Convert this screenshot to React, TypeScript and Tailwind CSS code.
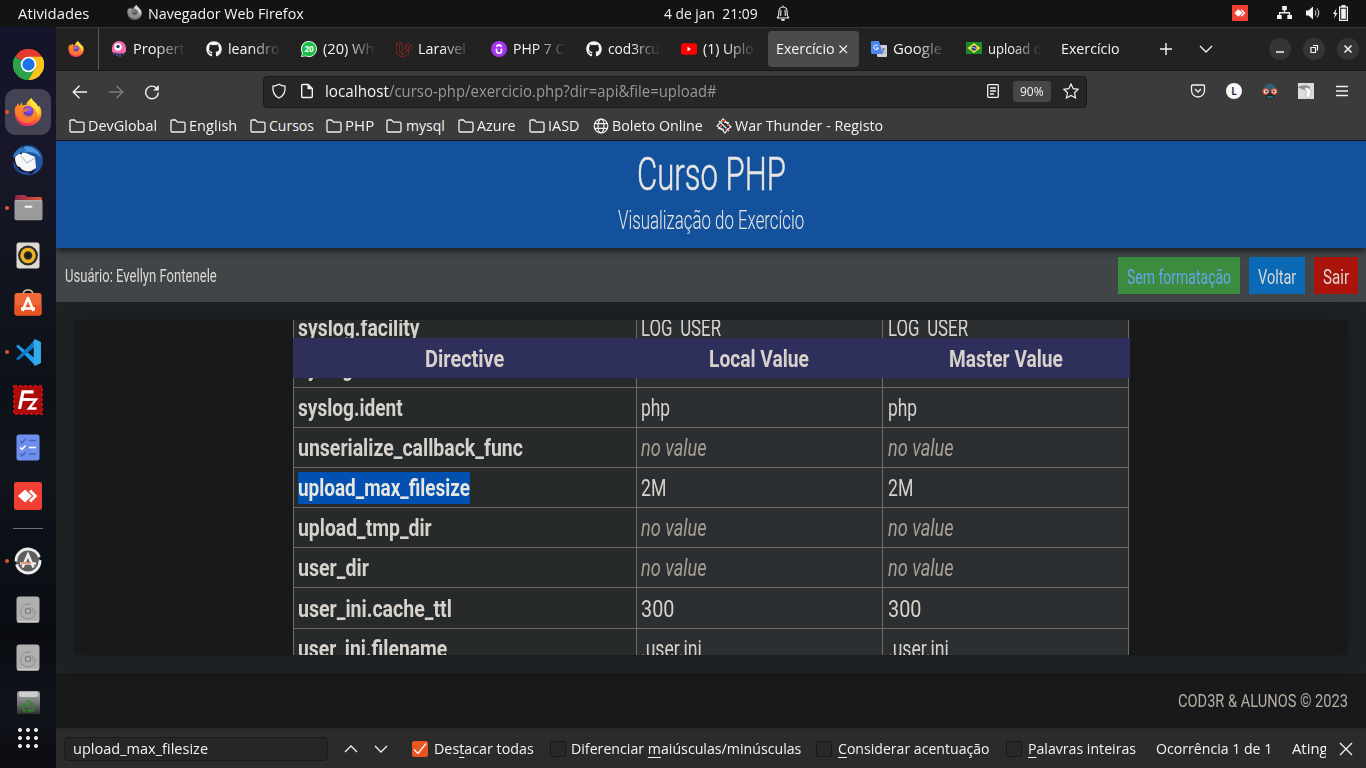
import React, { useLayoutEffect, useRef } from "react";
import { FaGithub, FaLaravel, FaRecycle } from "react-icons/fa";

/* Text run that is condensed or widened to the width of its box. */
function T({ c, children }: { c: string; children: React.ReactNode }) {
  const box = useRef<HTMLSpanElement>(null);
  const run = useRef<HTMLSpanElement>(null);
  useLayoutEffect(() => {
    const fit = () => {
      if (!box.current || !run.current) return;
      run.current.style.transform = `scaleX(${box.current.clientWidth / run.current.offsetWidth})`;
    };
    fit();
    document.fonts?.ready.then(fit);
  }, []);
  return (
    <span ref={box} className={"inline-block shrink-0 whitespace-nowrap " + c}>
      <span ref={run} className="inline-block origin-left whitespace-pre">{children}</span>
    </span>
  );
}

type S = { c?: string };

const Firefox = ({ c = "" }: S) => (
  <svg viewBox="0 0 32 32" className={"shrink-0 " + c}>
    <defs>
      <linearGradient id="ffa" x1="0.8" y1="0" x2="0.3" y2="1">
        <stop offset="0" stopColor="#fff14a" /><stop offset=".35" stopColor="#ffb224" />
        <stop offset=".65" stopColor="#ff5a36" /><stop offset="1" stopColor="#f0246e" />
      </linearGradient>
      <radialGradient id="ffb" cx=".6" cy=".3"><stop offset="0" stopColor="#a05cff" /><stop offset="1" stopColor="#5b33b8" /></radialGradient>
    </defs>
    <path d="M20 0c1 3 3 4 5 6 1 1 2 3 2 4l2-1c2 3 3 7 2 11-1 7-8 12-15 12C7 32 1 26 1 17c0-5 2-9 4-11l1 3 3-4 1 4c1-1 3-1 4-1 0-3 3-6 6-8z" fill="url(#ffa)" />
    <circle cx="16" cy="16" r="7" fill="url(#ffb)" />
    <path d="M1 10c4-1 8 0 10 2l6 0c-1 3-3 4-6 4 1 4 5 5 8 4 3-2 4-6 2-10 5 4 6 10 3 14-3 5-10 6-15 3-4-2-7-7-8-12z" fill="#ff8a26" fillOpacity=".75" />
    <path d="M20 0c1 3 3 4 5 6 4 4 5 10 3 15-1-5-3-8-6-10-4-3-5-7-2-11z" fill="#ffe03c" />
  </svg>
);

const Chrome = () => (
  <svg viewBox="0 0 48 48" className="size-[31px]">
    <path d="M24 24 3.200 12A24 24 0 0 1 44.800 12z" fill="#e33b2e" />
    <path d="M24 24H44.800V12A24 24 0 0 1 24 48z" fill="#fcc31e" />
    <path d="M24 24 24 48A24 24 0 0 1 3.200 12z" fill="#2ba24c" />
    <path d="M24 12H44.800A24 24 0 0 1 24 48L34.500 30z" fill="#fcc31e" />
    <path d="M3.200 12 13.600 30 34.400 30 24 48A24 24 0 0 1 3.200 12z" fill="#2ba24c" />
    <circle cx="24" cy="24" r="12" fill="#fff" /><circle cx="24" cy="24" r="9.500" fill="#1b73e8" />
  </svg>
);

const Thunderbird = () => (
  <svg viewBox="0 0 32 32" className="size-[32px]">
    <path d="M7 4C14-1 26 1 30 11c3 9-1 18-11 20l4-5L6 8z" fill="#2154a3" />
    <path d="M12 3c7-2 15 3 17 11-3-4-9-7-17-6z" fill="#4c97dd" />
    <path d="M3 13c3-4 7-5 11-4l9 4 1 11-5 3c-3 1-9 0-11-4-3 0-5-4-5-10z" fill="#f5f6f8" />
    <path d="M9 12l6 7 8-5" fill="none" stroke="#9ea7b5" strokeWidth=".9" />
    <path d="M1 17l4 6c3 4 5 5 11 5l4 3C10 33 0 26 1 17z" fill="#1c4a92" />
    <path d="M1 14c0-4 3-8 7-10 3-1 6 0 6 3l-7 3z" fill="#2d74bb" />
    <circle cx="9" cy="9.500" r="1" fill="#123" />
  </svg>
);

const Files = () => (
  <svg viewBox="0 0 30 26" className="w-[29px]">
    <defs><linearGradient id="fl"><stop offset="0" stopColor="#8b2548" /><stop offset="1" stopColor="#e25a33" /></linearGradient></defs>
    <path d="M1 2q0-2 2-2h8l3 2h13q2 0 2 2v9H1z" fill="url(#fl)" />
    <rect x="0.500" y="5.500" width="29" height="20.500" rx="2" fill="#9b9b9b" /><rect x="0.500" y="5.500" width="29" height="1" rx=".5" fill="#bbb" />
    <rect x="11" y="11" width="8" height="2.200" rx=".5" fill="#f4f4f4" />
  </svg>
);

const Rhythm = () => (
  <svg viewBox="0 0 24 27" className="mb-[1px] w-[24px]">
    <rect x=".5" y=".5" width="23" height="26" rx="2.500" fill="#dedad2" />
    <circle cx="12" cy="13.500" r="10" fill="#2d2d30" /><circle cx="12" cy="13.500" r="6" fill="none" stroke="#f0b41e" strokeWidth="3.400" /><circle cx="12" cy="13.500" r="2.400" fill="#1a1a1a" />
  </svg>
);

const Store = () => (
  <svg viewBox="0 0 28 27" className="mb-[3px] w-[28px]">
    <path d="M9 6q0-5 5-5t5 5" fill="none" stroke="#d8c3a0" strokeWidth="1.500" />
    <rect x=".5" y="4" width="27" height="22.500" rx="2.500" fill="#f0693a" /><rect x=".5" y="16" width="27" height="10.500" rx="2.500" fill="#e85424" />
    <path d="M8.500 22 14 9l5.500 13M7 19.500h14" fill="none" stroke="#fff" strokeWidth="2.600" strokeLinejoin="round" />
  </svg>
);

const Code = () => (
  <svg viewBox="0 0 26 26" className="w-[27px]">
    <path d="M1 7l2-1.500L21 20v4.500l-2 .5z" fill="#1f9cf0" /><path d="M1 19l2 1.500L21 6V1.500L19 1z" fill="#0a78c2" />
    <path d="M19 0l6 3v20l-6 3-1-2V2z" fill="#35a8ea" />
  </svg>
);

const FileZilla = () => (
  <svg viewBox="0 0 30 30" className="w-[30px]">
    <rect x="1" y="1" width="28" height="28" fill="#ae0a0a" stroke="#bd1010" strokeWidth="2" strokeDasharray="3 2" />
    <path d="M6.500 24 10 6.800h10.500M8.500 14.500h8" fill="none" stroke="#fff" strokeWidth="3.200" />
    <path d="M15 14.500h8l-7 9h7.500" fill="none" stroke="#fff" strokeWidth="2.400" />
  </svg>
);

const Todo = () => (
  <svg viewBox="0 0 24 27" className="mb-[1px] w-[24px]">
    <rect x=".5" y=".5" width="23" height="26" rx="2.500" fill="#6e8fee" />
    <g fill="none" strokeWidth="1.500"><path d="M4 7l2 2 3.500-4M13 6.500h7M4 20l2 2 3.500-4M13 20h7" stroke="#4664bd" /><path d="M4 13.500l2 2 3.500-4M13 13.500h7" stroke="#fff" /></g>
  </svg>
);

const AnyDesk = ({ c = "" }: S) => (
  <svg viewBox="0 0 28 28" className={"shrink-0 " + c}>
    <rect width="28" height="28" rx="1" fill="#f04034" />
    <path d="M4 14l7-6.500 7 6.500-7 6.500z" fill="#fff" /><path d="M16 8.500 21.500 14 16 19.500" fill="none" stroke="#fff" strokeWidth="2.600" />
  </svg>
);

const Updater = () => (
  <svg viewBox="0 0 28 28" className="w-[28px]">
    <circle cx="14" cy="14" r="12" fill="#5e5e5e" stroke="#ececec" strokeWidth="2.800" strokeDasharray="34 3" />
    <path d="M8.500 20.500 14 7.500l5.500 13" fill="none" stroke="#eee" strokeWidth="2.600" /><path d="M6 16.500h16" stroke="#eee" strokeWidth="2.400" /><path d="M7 16h10" stroke="#e8613a" strokeWidth="1.200" />
  </svg>
);

const Disk = () => (
  <svg viewBox="0 0 24 27" className="w-[24px]">
    <rect x=".5" y=".5" width="23" height="26" rx="3" fill="#b0b0b0" /><rect x="1" y="25" width="22" height="1.500" rx=".7" fill="#d0d0d0" />
    <path d="M15 8.500a7.500 7.500 0 1 0 4.500 6.500M15.500 11a5 5 0 0 1 1 6" fill="none" stroke="#929292" strokeWidth="1.100" /><circle cx="12" cy="15" r="2.600" fill="#b8b8b8" stroke="#7d7d7d" strokeWidth="1.300" />
  </svg>
);

const Folder = () => (
  <svg viewBox="0 0 16 14" className="w-[16px] shrink-0" fill="none" stroke="#f1f1f1" strokeWidth="1.300">
    <path d="M1 2.200Q1 1 2.200 1h3.300l2 2.200h6.300q1.200 0 1.200 1.200v7.400q0 1.200-1.200 1.200H2.200Q1 13 1 11.800z" />
  </svg>
);

const Globe = () => (
  <svg viewBox="0 0 16 16" className="w-[16px] shrink-0" fill="none" stroke="#f1f1f1" strokeWidth="1.200">
    <circle cx="8" cy="8" r="6.800" /><ellipse cx="8" cy="8" rx="3" ry="6.800" /><path d="M1.800 5.700h12.400M1.800 10.300h12.400" />
  </svg>
);

const Line = ({ d, c = "", w = 1.3 }: { d: string; c?: string; w?: number }) => (
  <svg viewBox="0 0 16 16" className={"size-[16px] shrink-0 " + c} fill="none" stroke="currentColor" strokeWidth={w}><path d={d} /></svg>
);

function DockCell({ children, dot, active, h = "h-[48px]" }: { children: React.ReactNode; dot?: boolean; active?: boolean; h?: string }) {
  return (
    <div className={"relative flex w-full shrink-0 items-center justify-center overflow-hidden " + h}>
      <div className={"flex h-[46px] w-[46px] items-center justify-center rounded-[11px] " + (active ? "bg-[#444354]" : "")}>{children}</div>
      {dot && <i className="absolute left-[5px] top-[22px] size-[4px] rounded-full bg-[#e95420]" />}
    </div>
  );
}

function Dock() {
  return (
    <aside className="flex w-[56px] shrink-0 flex-col bg-[linear-gradient(180deg,#14142a_0%,#171728_20%,#12151f_32%,#0c1118_50%,#10161b_60%,#0c1119_68%,#0a0c12_82%,#11131b_92%,#0b0c11_100%)] pt-[13px]">
      <DockCell><Chrome /></DockCell>
      <DockCell dot active><Firefox c="size-[28px]" /></DockCell>
      <DockCell><Thunderbird /></DockCell>
      <DockCell dot><Files /></DockCell>
      <DockCell><Rhythm /></DockCell>
      <DockCell><Store /></DockCell>
      <DockCell dot><Code /></DockCell>
      <DockCell><FileZilla /></DockCell>
      <DockCell><Todo /></DockCell>
      <DockCell><AnyDesk c="size-[28px] rounded-[2px]" /></DockCell>
      <div className="flex h-[17px] items-center justify-center"><div className="h-px w-[30px] bg-[#6d6d70]" /></div>
      <DockCell dot><Updater /></DockCell>
      <DockCell><Disk /></DockCell>
      <DockCell><Disk /></DockCell>
      <div className="flex h-[33px] items-start justify-center overflow-hidden pt-[10px]">
        <div className="flex h-[23px] w-[23px] flex-col items-center rounded-t-[3px] bg-[linear-gradient(180deg,#a8a8a8,#777_50%,#303030)]">
          <div className="mt-[1px] h-[5px] w-[19px] rounded-[2px] bg-[#cdcdcd]" />
          <FaRecycle className="mt-[3px] size-[13px] text-[#2a8a28]" />
        </div>
      </div>
      <div className="flex h-[48px] items-center justify-center">
        <div className="grid grid-cols-3 gap-[4px]">
          {Array.from({ length: 9 }, (_, i) => <i key={i} className="size-[4px] rounded-full bg-[#f4f4f4]" />)}
        </div>
      </div>
    </aside>
  );
}

function TopBar() {
  return (
    <div className="flex h-[27px] shrink-0 items-center bg-[#131313] text-[14px] leading-[27px] text-[#f2f2f2]">
      <T c="ml-[18px] w-[71px]">Atividades</T>
      <Firefox c="mb-[2px] ml-[38px] size-[15px] grayscale" />
      <T c="ml-[6px] w-[156px]">Navegador Web Firefox</T>
      <T c="ml-[360px] w-[94px]">{"4 de jan  21:09"}</T>
      <svg viewBox="0 0 16 16" className="mb-[1px] ml-[17px] size-[16px] shrink-0" fill="none" stroke="#eee" strokeWidth="1.100">
        <path d="M2 13C4 12 3.800 10 3.800 7.500 3.800 4 5.500 2 8 2s4.200 2 4.200 5.500c0 2.500-.2 4.500 1.800 5.500zM8 .5v2M6 5q-.3 3-.3 6M10 5q.3 3 .3 6" /><path d="M6.300 14.900h3.400" strokeWidth="1.800" />
      </svg>
      <AnyDesk c="mb-[1px] ml-[441px] size-[16px]" />
      <svg viewBox="0 0 16 14" className="mb-[2px] ml-[29px] w-[15px] shrink-0" fill="#f2f2f2">
        <path d="M5.500 0h5v4.500h-5zM0 9.500h5V14H0zM11 9.500h5V14h-5zM7.300 4h1.400v2.500H14V10h-1.400V7.900H3.400V10H2V6.500h5.300z" />
      </svg>
      <svg viewBox="0 0 16 14" className="mb-[1px] ml-[13px] w-[16px] shrink-0" fill="#f2f2f2">
        <path d="M1 4.500h2.500L8 .5v13l-4.500-4H1z" /><path d="M10 4.500q1.800 2.500 0 5M12 2.500q3.500 4.500 0 9" stroke="#bbb" fill="none" strokeWidth="1.200" />
      </svg>
      <svg viewBox="0 0 16 16" className="mb-[1px] ml-[12px] w-[16px] shrink-0" fill="#f2f2f2">
        <path d="M3.500 3.500 0 9h2l-1 4.500L4.500 8h-2z" /><path d="M8.500 0h4v1.500H15V16H6V1.500h2.500z" /><path d="M7.200 2.700h6.600v12.100H7.200z" fill="#131313" /><path d="M8.200 3.700h4.600v10.100H8.200z" />
      </svg>
    </div>
  );
}

const fade = "[mask-image:linear-gradient(90deg,#000_45%,transparent_102%)]";

function Tab({ icon, text, w }: { icon: React.ReactNode; text: string; w: string }) {
  return (
    <div className="flex w-[95px] shrink-0 items-center">
      <span className="flex w-[16px] justify-center">{icon}</span>
      <span className={"ml-[6px] flex w-[52px] overflow-hidden " + fade}><T c={w}>{text}</T></span>
    </div>
  );
}

function TabBar() {
  return (
    <div className="flex h-[44px] shrink-0 items-center border-b border-t border-b-[#171717] border-t-[#343434] bg-[#222222] text-[14px] leading-[42px] text-[#f5f5f5]">
      <Firefox c="ml-[12px] size-[16px]" />
      <div className="ml-[14px] mr-[12px] h-full w-px shrink-0 bg-[#585858]" />
      <Tab w="w-[52px]" text="Propert" icon={
        <svg viewBox="0 0 16 16" className="size-[16px]"><path d="M3 10v3.500M6 11v4M9 11v5M12.500 9v5" stroke="#5650a8" strokeWidth="1.700" /><path d="M1 11V7a7 7 0 0 1 14 0v4q-3 2-7 1.500T1 11z" fill="#f36ba8" /><circle cx="7" cy="6" r="3.700" fill="#fff" /><circle cx="7" cy="5.500" r="1.700" fill="#243066" /></svg>} />
      <Tab w="w-[51px]" text="leandro" icon={<FaGithub className="size-[16px]" />} />
      <Tab w="w-[51px]" text="(20) Wh" icon={
        <svg viewBox="0 0 16 16" className="size-[16px]"><path d="M8 0a8 8 0 1 1-3.500 15.200L0 16l1-4A8 8 0 0 1 8 0z" fill="#fff" /><path d="M8 .8a7.200 7.200 0 1 1-3.300 13.600L1 15.200l.9-3.500A7.200 7.200 0 0 1 8 .8z" fill="#1dbf4b" /><text x="8" y="11" textAnchor="middle" fontSize="8" fontWeight="700" fill="#fff" fontFamily="Open Sans">20</text></svg>} />
      <Tab w="w-[48px]" text="Laravel" icon={<FaLaravel className="size-[17px] text-[#b3261e]" />} />
      <Tab w="w-[51px]" text="PHP 7 C" icon={
        <svg viewBox="0 0 16 16" className="size-[16px]"><circle cx="8" cy="8" r="8" fill="#a435f0" /><path d="M5.500 7.500v2.500q0 2.200 2.500 2.200t2.500-2.200V7.500M5.200 5.500 8 3.800l2.800 1.700" stroke="#fff" strokeWidth="1.600" fill="none" /></svg>} />
      <Tab w="w-[52px]" text="cod3rcu" icon={<FaGithub className="size-[16px]" />} />
      <Tab w="w-[51px]" text="(1) Uplo" icon={
        <svg viewBox="0 0 16 12" className="w-[16px]"><rect y=".3" width="16" height="11.400" rx="2.500" fill="#f00" /><path d="M6.500 3.800v4.400L10 6z" fill="#fff" /></svg>} />
      <div className="ml-[-8px] flex h-[36px] w-[91px] shrink-0 items-center rounded-[4px] bg-[#4a4a4a]">
        <T c="ml-[8px] w-[59px]">Exercício</T>
        <Line d="M4.500 4.500l7.500 7.500M12 4.500l-7.500 7.500" c="size-[15px]" w={1.100} />
      </div>
      <div className="ml-[12px] flex">
        <Tab w="w-[49px]" text="Google" icon={
          <svg viewBox="0 0 16 16" className="size-[16px]"><rect x="6" y="4" width="10" height="12" rx="1" fill="#cfd3d8" /><path d="M0 1q0-1 1-1h7l4 13H1q-1 0-1-1z" fill="#4b87f0" /><path d="M7 5a2.300 2.300 0 1 0 .3 2H5" stroke="#fff" fill="none" /><path d="M10.500 8h4M12.500 7v1q0 3-2 4.500M11.500 9.500l3 3" stroke="#66717d" fill="none" strokeWidth=".8" /></svg>} />
        <Tab w="w-[54px]" text="upload d" icon={
          <svg viewBox="0 0 16 12" className="mb-[2px] w-[16px]"><rect width="16" height="12" fill="#1d8a2e" /><path d="M8 1l6.500 5L8 11 1.500 6z" fill="#f7e12c" /><circle cx="8" cy="6" r="2.600" fill="#2343a0" /><path d="M5.700 5.500q2.500-.5 4.500 1.200" stroke="#fff" strokeWidth=".6" fill="none" /></svg>} />
      </div>
      <T c="w-[59px]">Exercício</T>
      <Line d="M8 2v12M2 8h12" c="ml-[38px]" w={1.400} />
      <Line d="M2 5l6 6 6-6" c="ml-[24px]" />
      <div className="ml-[55px] flex gap-[12px]">
        <span className="flex size-[22px] items-center justify-center rounded-full bg-[#353535]"><Line d="M4 11h8" w={1.500} /></span>
        <span className="flex size-[22px] items-center justify-center rounded-full bg-[#353535]"><Line d="M5 6.500h4.500v5H5zM7 4.500h4.500v5" w={1.200} /></span>
        <span className="flex size-[22px] items-center justify-center rounded-full bg-[#353535]"><Line d="M4.500 4.500l7 7M11.500 4.500l-7 7" w={1.500} /></span>
      </div>
    </div>
  );
}

function AddressRow() {
  return (
    <div className="flex h-[41px] items-center text-[#f3f3f3]">
      <Line d="M15 8H1M7.500 1.800 1.200 8l6.300 6.200" c="ml-[16px]" w={1.300} />
      <Line d="M1 8h14M8.500 1.800 14.800 8l-6.300 6.200" c="ml-[20px] text-[#7d7d7d]" w={1.300} />
      <svg viewBox="0 0 16 16" className="ml-[20px] size-[16px] shrink-0" fill="none" stroke="currentColor" strokeWidth="1.400"><path d="M14.300 8.500A6.300 6.300 0 1 1 12.500 4" /><path d="M14.800 1v5.500H9.300z" fill="currentColor" stroke="none" /></svg>
      <div className="ml-[103px] flex h-[32px] w-[824px] shrink-0 items-center rounded-[4px] border border-[#181818] bg-[#262626]">
        <Line d="M8 1.200q3 1.800 6 2c.6 5.300-1.200 9.500-6 11.800C3.200 12.700 1.400 8.500 2 3.200q3-.2 6-2z" c="mb-[1px] ml-[7px]" />
        <svg viewBox="0 0 16 16" className="mb-[1px] ml-[12px] size-[16px] shrink-0" fill="none" stroke="currentColor" strokeWidth="1.400"><path d="M2.700 2.500q0-1 1-1h5.500L13.300 5.600v7.900q0 1-1 1H3.700q-1 0-1-1z" /><path d="M8.500 1v5.300h5z" fill="currentColor" stroke="none" /></svg>
        <T c="mb-[2px] ml-[10px] w-[64px] text-[15.500px] leading-[28px]">localhost</T>
        <T c="mb-[2px] w-[328px] text-[15.500px] leading-[28px] text-[#989898]">/curso-php/exercicio.php?dir=api&amp;file=upload#</T>
        <Line d="M3.500 1.700h9q.8 0 .8.800v11q0 .8-.8.800h-9q-.8 0-.8-.8v-11q0-.8.800-.8zM5 5h6M5 8h6M5 11h4" c="mb-[1px] ml-[268px]" />
        <span className="ml-[12px] flex h-[21px] w-[38px] shrink-0 items-center rounded-[3px] bg-[#464646] text-[12.500px] leading-[21px]"><T c="ml-[7px] w-[24px]">90%</T></span>
        <Line d="M8 1l2.200 4.700 5 .6-3.700 3.500 1 5.100L8 12.400l-4.500 2.500 1-5.100L.8 6.300l5-.6z" c="mb-[1px] ml-[12px]" w={1.200} />
      </div>
      <Line d="M2.500 2h11q1 0 1 1v4.500a6.500 6.500 0 0 1-13 0V3q0-1 1-1zM5 6l3 3 3-3" c="mb-[1px] ml-[103px]" />
      <span className="mb-[1px] ml-[20px] flex size-[16px] shrink-0 items-center justify-center rounded-full bg-[#f8f8f8] text-[10px] font-bold leading-[16px] text-[#333]">L</span>
      <svg viewBox="0 0 16 16" className="mb-[1px] ml-[20px] size-[16px] shrink-0"><path d="M2 6.500Q3 1 8 .5 13 1 14 6.500v2H2z" fill="#2c6173" /><path d="M4 10h8v5.500H4z" fill="#16262d" /><circle cx="3.800" cy="8.500" r="2.600" fill="#f6e9e2" stroke="#e25a3c" strokeWidth="1.300" /><circle cx="12.200" cy="8.500" r="2.600" fill="#f6e9e2" stroke="#e25a3c" strokeWidth="1.300" /><circle cx="4.100" cy="8.500" r=".9" fill="#111" /><circle cx="11.900" cy="8.500" r=".9" fill="#111" /><path d="M5 14h6" stroke="#3aa6c4" /></svg>
      <svg viewBox="0 0 16 16" className="mb-[1px] ml-[20px] size-[16px] shrink-0"><rect width="16" height="16" fill="#dcdcdc" /><path d="M0 5q1-2.500 5-2.500 4-1 7 1.500v3H6Q3 5 0 5z" fill="#8d8d8d" /><path d="M6 5q4-1 6 1 2 3 .5 7l-3 2.500Q6.500 12 8.500 8 7 6 6 5z" fill="#fafafa" stroke="#999" strokeWidth=".6" /></svg>
      <Line d="M2 3.500h12M2 8h12M2 12.500h12" c="mb-[1px] ml-[20px]" />
    </div>
  );
}

const marks: [string, string][] = [
  ["DevGlobal", "w-[69px] mr-[13px]"], ["English", "w-[48px] mr-[13px]"], ["Cursos", "w-[45px] mr-[12px]"],
  ["PHP", "w-[29px] mr-[12px]"], ["mysql", "w-[39px] mr-[13px]"], ["Azure", "w-[39px] mr-[13px]"], ["IASD", "w-[32px] mr-[13px]"],
];

function Bookmarks() {
  return (
    <div className="flex h-[28px] items-center pl-[13px] text-[14px] leading-[28px] text-[#f3f3f3]">
      {marks.map(([t, w], i) => <div key={t} className={"flex items-center " + (i > 3 && i < 5 ? "gap-[4px]" : "gap-[3px]")}><Folder /><T c={w}>{t}</T></div>)}
      <Globe />
      <T c="ml-[3px] w-[91px]">Boleto Online</T>
      <svg viewBox="0 0 16 16" className="ml-[13px] w-[16px] shrink-0"><path d="M1 8l3-3 3-4 3 3 5 5-3 2-3 4-3-4z" fill="#1c3440" stroke="#eee" strokeWidth="1.200" /><path d="M3 3l10 10M8 4l5 1M2 10l6 2" stroke="#e8e8e8" strokeWidth="1.400" /><path d="M6 3h3M11 7h2M4 8h2M9 11h2" stroke="#df4a2e" strokeWidth="1.800" /></svg>
      <T c="ml-[3px] w-[148px]">War Thunder - Registo</T>
    </div>
  );
}

type Row = { n: string; w: string; v: string; vw: string; none?: boolean; hit?: boolean; h?: string };
const rows: Row[] = [
  { n: "syslog.facility", w: "w-[122px]", v: "LOG_USER", vw: "w-[80px]" },
  { n: "syslog.filter", w: "w-[100px]", v: "no-ctrl", vw: "w-[54px]" },
  { n: "syslog.ident", w: "w-[105px]", v: "php", vw: "w-[29px]" },
  { n: "unserialize_callback_func", w: "w-[225px]", v: "no value", vw: "w-[66px]", none: true },
  { n: "upload_max_filesize", w: "w-[172px]", v: "2M", vw: "w-[25px]", hit: true },
  { n: "upload_tmp_dir", w: "w-[134px]", v: "no value", vw: "w-[66px]", none: true },
  { n: "user_dir", w: "w-[71px]", v: "no value", vw: "w-[66px]", none: true },
  { n: "user_ini.cache_ttl", w: "w-[154px]", v: "300", vw: "w-[33px]", h: "h-[41px]" },
  { n: "user_ini.filename", w: "w-[149px]", v: ".user.ini", vw: "w-[61px]" },
];

function Table() {
  const cell = "flex items-center border-b border-r border-[#736b5e] pl-[4px] pt-[1px] ";
  return (
    <div className="w-[836px] text-[24px] leading-[32px] text-[#d6d2cb]">
      {rows.map((r) => (
        <div key={r.n} className={"grid grid-cols-[344px_246px_246px] " + (r.h ?? "h-[40px]")}>
          <div className={cell + "border-l bg-[#262a2b] font-bold"}>
            <span className={"flex h-[32px] leading-[33px] " + (r.hit ? "bg-[#0250b0] text-[#e8e6e3]" : "")}><T c={r.w}>{r.n}</T></span>
          </div>
          {[0, 1].map((k) => (
            <div key={k} className={cell + "bg-[#2b2f31] " + (k ? "pl-[5px] " : "") + (r.none ? "italic text-[#a89f93]" : "")}>
              <T c={r.vw}>{r.v === "LOG_USER" ? <>LOG<span className="relative top-[3px]">_</span>USER</> : r.v}</T>
            </div>
          ))}
        </div>
      ))}
    </div>
  );
}

function Page() {
  return (
    <div className="flex flex-1 flex-col overflow-hidden bg-[#1e2224] font-['Roboto',sans-serif]">
      <header className="z-10 flex h-[107px] shrink-0 flex-col items-center bg-[#13519c] font-light text-[#e8e6e3] shadow-[0_2px_8px_rgba(0,0,0,0.75)]">
        <T c="mt-[5px] w-[149px] text-[45.500px] leading-[58px] [-webkit-text-stroke:0.5px_#e8e6e3]">Curso PHP</T>
        <T c="mt-[1px] w-[186px] text-[26px] leading-[30px]">Visualização do Exercício</T>
      </header>
      <div className="flex h-[54px] shrink-0 items-center bg-[#404648] pl-[9px] pr-[8px] text-[#dcd9d4]">
        <T c="w-[152px] pt-[2px] text-[18.500px] leading-[26px]">Usuário: Evellyn Fontenele</T>
        <div className="ml-auto flex items-center gap-[9px] pt-[1px] text-[21px] leading-[40px]">
          <div className="flex h-[37px] w-[122px] bg-[#3c8c40] pl-[9px] text-[#68a4ea]"><T c="w-[104px]">Sem formatação</T></div>
          <div className="flex h-[37px] w-[56px] bg-[#0b6ab5] pl-[9px]"><T c="w-[38px]">Voltar</T></div>
          <div className="flex h-[37px] w-[44px] bg-[#ab140a] pl-[9px]"><T c="w-[26px]">Sair</T></div>
        </div>
      </div>
      <main className="h-[371px] shrink-0 p-[18px]">
        <div className="relative flex h-[335px] flex-col items-center overflow-hidden bg-[#18191b] shadow-[0_0_20px_rgba(0,0,0,0.2)]">
          <div className="mt-[-12px] shrink-0"><Table /></div>
          <div className="absolute left-[219px] top-[18px] grid h-[40px] w-[837px] grid-cols-[343px_246px_248px] bg-[#2f2f5c] text-[24px] font-bold leading-[43px] text-[#d6d2cb]">
            <div className="text-center"><T c="w-[79px]">Directive</T></div>
            <div className="text-center"><T c="w-[100px]">Local Value</T></div>
            <div className="text-center"><T c="w-[114px]">Master Value</T></div>
          </div>
        </div>
      </main>
      <footer className="flex h-[55px] shrink-0 items-center justify-end bg-[#18191b] pr-[18px] text-[19px] leading-[55px] text-[#b5aea3]">
        <T c="w-[170px]">COD3R &amp; ALUNOS © 2023</T>
      </footer>
    </div>
  );
}

const Box = ({ on, c }: { on?: boolean; c: string }) => (
  <span className={"flex size-[16px] shrink-0 items-center justify-center rounded-[2px] border " + (on ? "border-[#e95420] bg-[#e95420] " : "border-[#191919] bg-[#282828] ") + c}>
    {on && <Line d="M2 8.500l4 4 8-10" c="text-white" />}
  </span>
);

const U = ({ children }: { children: string }) => <span className="underline decoration-1 underline-offset-[3px]">{children}</span>;

function FindBar() {
  return (
    <div className="flex h-[40px] shrink-0 items-center border-t border-[#262626] bg-[#2b2b2b] text-[14px] leading-[38px] text-[#f3f3f3]">
      <div className="ml-[8px] flex h-[24px] w-[264px] shrink-0 items-center rounded-[4px] border border-[#1b1b1b] bg-[#262626] pl-[8px]"><T c="w-[135px]">upload_max_filesize</T></div>
      <Line d="M2 11l6-6 6 6" c="ml-[15px]" />
      <Line d="M2 5l6 6 6-6" c="ml-[14px]" />
      <Box on c="ml-[23px]" />
      <T c="ml-[6px] w-[100px]">Des<U>t</U>acar todas</T>
      <Box c="ml-[16px]" />
      <T c="ml-[5px] w-[230px]">Diferenciar <U>m</U>aiúsculas/minúsculas</T>
      <Box c="ml-[15px]" />
      <T c="ml-[6px] w-[152px]"><U>C</U>onsiderar acentuação</T>
      <Box c="ml-[16px]" />
      <T c="ml-[6px] w-[108px]"><U>P</U>alavras inteiras</T>
      <T c="ml-[20px] w-[116px]">Ocorrência 1 de 1</T>
      <div className="ml-[20px] flex w-[34px] shrink-0 overflow-hidden"><T c="w-[36px]">Ating</T></div>
      <Line d="M2 2l12 12M14 2L2 14" c="ml-[12px]" />
    </div>
  );
}

export default function App() {
  return (
    <div className="flex h-[768px] w-[1366px] flex-col overflow-hidden bg-[#131313] font-['Open_Sans','Noto_Sans',sans-serif]">
      <TopBar />
      <div className="flex min-h-0 flex-1">
        <Dock />
        <div className="flex min-w-0 flex-1 flex-col">
          <TabBar />
          <div className="h-[70px] shrink-0 border-b border-[#181818] bg-[#3b3b3b]">
            <AddressRow />
            <Bookmarks />
          </div>
          <Page />
          <FindBar />
        </div>
      </div>
    </div>
  );
}
